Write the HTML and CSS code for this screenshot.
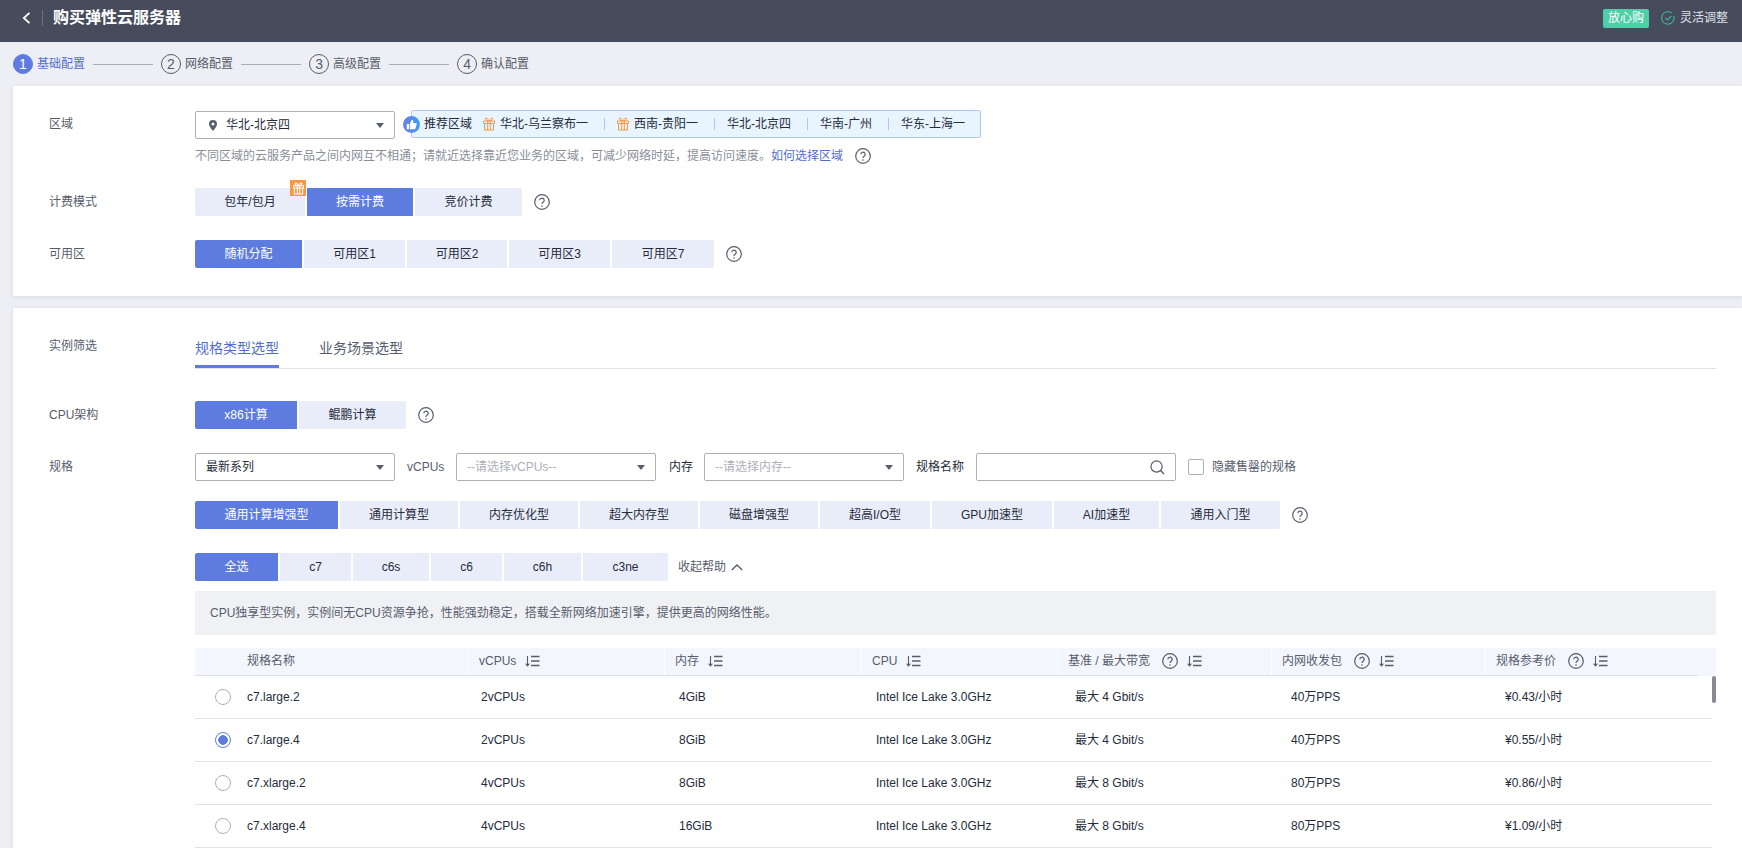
FILE: index.html
```html
<!DOCTYPE html>
<html lang="zh-CN">
<head>
<meta charset="utf-8">
<title>购买弹性云服务器</title>
<link rel="stylesheet" href="styles.css">
</head>
<body>
<svg class="defs" aria-hidden="true">
  <symbol id="q" viewBox="0 0 16 16"><circle cx="8" cy="8" r="7.3" fill="none" stroke="#575d6c" stroke-width="1.2"/><path d="M5.8 6.3a2.2 2.2 0 1 1 3.5 1.8c-.9.6-1.3 1-1.3 2" fill="none" stroke="#575d6c" stroke-width="1.2"/><circle cx="8" cy="12" r=".8" fill="#575d6c"/></symbol>
  <symbol id="sort" viewBox="0 0 16 14"><path d="M3.5 2v9.5M1.6 9.6l1.9 2.2 1.9-2.2" fill="none" stroke="#575d6c" stroke-width="1.1"/><path d="M7 2.5h8.5M7 7h8.5M7 11.5h8.5" stroke="#575d6c" stroke-width="1.3"/></symbol>
  <symbol id="gift" viewBox="0 0 12 14"><path d="M1.500 6.500h9V13h-9zM.5 4h11v2.500H.5zM4.700 4v9M7.300 4v9M6 4C5 1.500 3 .5 2.300 1.500S3.500 4 6 4C8.500 4 10.400 2.500 9.700 1.500S7 1.500 6 4" fill="none" stroke="#fa9841" stroke-width="1"/></symbol>
  <symbol id="giftw" viewBox="0 0 12 14"><path d="M1.500 6.500h9V13h-9zM.5 4h11v2.500H.5zM4.700 4v9M7.300 4v9M6 4C5 1.500 3 .5 2.300 1.500S3.500 4 6 4C8.500 4 10.400 2.500 9.700 1.500S7 1.500 6 4" fill="none" stroke="#fff" stroke-width="1.100"/></symbol>
  <linearGradient id="thumbfill" x1="0" y1="0" x2="1" y2="0"><stop offset="0" stop-color="#6f7fe6"/><stop offset="1" stop-color="#3d9bf0"/></linearGradient>
</svg>

<header class="topbar">
  <svg class="back" viewBox="0 0 9 12"><path d="M7.500 .8 1.800 6l5.700 5.200" fill="none" stroke="#fff" stroke-width="1.800"/></svg>
  <span class="divider"></span>
  <h1 class="title">购买弹性云服务器</h1>
  <span class="badge">放心购</span>
  <svg class="check" viewBox="0 0 14 14"><path d="M12.600 4.600A6.200 6.200 0 1 1 10.600 2" fill="none" stroke="#3fb795" stroke-width="1.100"/><path d="M4.300 6.800l2.200 2.200 3.900-4" fill="none" stroke="#3fb795" stroke-width="1.100"/></svg>
  <span class="flex-adjust">灵活调整</span>
</header>

<nav class="steps">
  <span class="num num-on">1</span><span class="step step-on">基础配置</span><span class="line"></span>
  <span class="num">2</span><span class="step">网络配置</span><span class="line"></span>
  <span class="num">3</span><span class="step">高级配置</span><span class="line"></span>
  <span class="num">4</span><span class="step">确认配置</span>
</nav>

<section class="card card-a">
  <div class="row row-region">
    <label class="label">区域</label>
    <div class="select select-region">
      <svg class="pin" viewBox="0 0 8 11"><path d="M4 0a4 4 0 0 1 4 4c0 2.600-4 7-4 7S0 6.600 0 4a4 4 0 0 1 4-4zm0 2.500a1.500 1.500 0 1 0 0 3 1.500 1.500 0 0 0 0-3z" fill="#575d6c" fill-rule="evenodd"/></svg>
      <span>华北-北京四</span><i class="caret"></i>
    </div>
    <div class="rec">
      <svg class="thumb" viewBox="0 0 17 17"><circle cx="8.500" cy="8.500" r="8.500" fill="url(#thumbfill)"/><path d="M3.800 8h2.200v5.200H3.800zM6.800 8l2-4.200c1.100 0 1.700.9 1.500 1.900L10 7h2.800c.7 0 1.100.6.900 1.200l-1.200 4.100c-.1.500-.6.900-1.100.9H6.800z" fill="#fff"/></svg>
      <span class="rec-title">推荐区域</span>
      <span class="rec-item"><svg class="gift" viewBox="0 0 12 14"><use href="#gift"/></svg>华北-乌兰察布一</span>
      <span class="rec-item"><svg class="gift" viewBox="0 0 12 14"><use href="#gift"/></svg>西南-贵阳一</span>
      <span class="rec-item">华北-北京四</span>
      <span class="rec-item">华南-广州</span>
      <span class="rec-item rec-last">华东-上海一</span>
    </div>
  </div>
  <div class="hint">不同区域的云服务产品之间内网互不相通；请就近选择靠近您业务的区域，可减少网络时延，提高访问速度。<a class="link">如何选择区域</a><svg class="help help-hint"><use href="#q"/></svg></div>

  <div class="row row-gap">
    <label class="label">计费模式</label>
    <div class="seg seg-bill">
      <button class="btn btn-first">包年/包月<span class="gift-badge"><svg viewBox="0 0 12 14"><use href="#giftw"/></svg></span></button>
      <button class="btn on">按需计费</button>
      <button class="btn btn-last">竞价计费</button>
    </div>
    <svg class="help"><use href="#q"/></svg>
  </div>

  <div class="row row-gap">
    <label class="label">可用区</label>
    <div class="seg seg-zone">
      <button class="btn on btn-first">随机分配</button>
      <button class="btn">可用区1</button>
      <button class="btn">可用区2</button>
      <button class="btn">可用区3</button>
      <button class="btn btn-last">可用区7</button>
    </div>
    <svg class="help"><use href="#q"/></svg>
  </div>
</section>

<section class="card card-b">
  <div class="row row-tabs">
    <label class="label label-tabs">实例筛选</label>
    <div class="tabs">
      <span class="tab tab-on">规格类型选型</span>
      <span class="tab">业务场景选型</span>
    </div>
  </div>

  <div class="row row-cpu">
    <label class="label">CPU架构</label>
    <div class="seg seg-cpu">
      <button class="btn on btn-first">x86计算</button>
      <button class="btn btn-last">鲲鹏计算</button>
    </div>
    <svg class="help"><use href="#q"/></svg>
  </div>

  <div class="row row-gap">
    <label class="label">规格</label>
    <div class="select"><span>最新系列</span><i class="caret"></i></div>
    <span class="field-label fl-vcpu">vCPUs</span>
    <div class="select select-ph"><span>--请选择vCPUs--</span><i class="caret"></i></div>
    <span class="field-label fl-mem">内存</span>
    <div class="select select-ph"><span>--请选择内存--</span><i class="caret"></i></div>
    <span class="field-label fl-name">规格名称</span>
    <div class="select search">
      <svg class="search-icon" viewBox="0 0 16 16"><circle cx="7" cy="7" r="6" fill="none" stroke="#575d6c" stroke-width="1.300"/><path d="M11.300 11.300 15 15" stroke="#575d6c" stroke-width="1.500"/></svg>
    </div>
    <span class="checkbox"></span>
    <span class="check-label">隐藏售罄的规格</span>
  </div>

  <div class="row row-type">
    <span class="label"></span>
    <div class="seg seg-type">
      <button class="btn on btn-first">通用计算增强型</button>
      <button class="btn">通用计算型</button>
      <button class="btn">内存优化型</button>
      <button class="btn">超大内存型</button>
      <button class="btn">磁盘增强型</button>
      <button class="btn">超高I/O型</button>
      <button class="btn">GPU加速型</button>
      <button class="btn">AI加速型</button>
      <button class="btn btn-last">通用入门型</button>
    </div>
    <svg class="help"><use href="#q"/></svg>
  </div>

  <div class="row row-gap">
    <span class="label"></span>
    <div class="seg seg-sub">
      <button class="btn on btn-first">全选</button>
      <button class="btn">c7</button>
      <button class="btn">c6s</button>
      <button class="btn">c6</button>
      <button class="btn">c6h</button>
      <button class="btn btn-last">c3ne</button>
    </div>
    <span class="collapse">收起帮助</span>
    <svg class="chevron" viewBox="0 0 12 7"><path d="M.8 6 6 1l5.200 5" fill="none" stroke="#575d6c" stroke-width="1.400"/></svg>
  </div>

  <div class="help-box">CPU独享型实例，实例间无CPU资源争抢，性能强劲稳定，搭载全新网络加速引擎，提供更高的网络性能。</div>

  <div class="table">
    <div class="thead">
      <div class="th th-name">规格名称</div>
      <div class="th">vCPUs<svg class="sort sort-near"><use href="#sort"/></svg></div>
      <div class="th">内存<svg class="sort sort-near"><use href="#sort"/></svg></div>
      <div class="th">CPU<svg class="sort sort-near"><use href="#sort"/></svg></div>
      <div class="th">基准 / 最大带宽<svg class="help help-th"><use href="#q"/></svg><svg class="sort"><use href="#sort"/></svg></div>
      <div class="th">内网收发包<svg class="help help-th"><use href="#q"/></svg><svg class="sort"><use href="#sort"/></svg></div>
      <div class="th">规格参考价<svg class="help help-th"><use href="#q"/></svg><svg class="sort"><use href="#sort"/></svg></div>
    </div>
    <div class="tr">
      <div class="td td-name"><span class="radio"></span>c7.large.2</div><div class="td">2vCPUs</div><div class="td">4GiB</div><div class="td">Intel Ice Lake 3.0GHz</div><div class="td">最大 4 Gbit/s</div><div class="td">40万PPS</div><div class="td">¥0.43/小时</div>
    </div>
    <div class="tr">
      <div class="td td-name"><span class="radio radio-on"></span>c7.large.4</div><div class="td">2vCPUs</div><div class="td">8GiB</div><div class="td">Intel Ice Lake 3.0GHz</div><div class="td">最大 4 Gbit/s</div><div class="td">40万PPS</div><div class="td">¥0.55/小时</div>
    </div>
    <div class="tr">
      <div class="td td-name"><span class="radio"></span>c7.xlarge.2</div><div class="td">4vCPUs</div><div class="td">8GiB</div><div class="td">Intel Ice Lake 3.0GHz</div><div class="td">最大 8 Gbit/s</div><div class="td">80万PPS</div><div class="td">¥0.86/小时</div>
    </div>
    <div class="tr">
      <div class="td td-name"><span class="radio"></span>c7.xlarge.4</div><div class="td">4vCPUs</div><div class="td">16GiB</div><div class="td">Intel Ice Lake 3.0GHz</div><div class="td">最大 8 Gbit/s</div><div class="td">80万PPS</div><div class="td">¥1.09/小时</div>
    </div>
    <span class="scrollbar"></span>
  </div>
</section>
</body>
</html>
```
FILE: styles.css
```css
* { box-sizing: border-box; }
html, body { margin: 0; height: 848px; overflow: hidden; }
body {
  background: #eeeff4;
  color: #252b3a;
  font: 12px/16px "Liberation Sans", "Noto Sans CJK SC", sans-serif;
}
.defs { position: absolute; width: 0; height: 0; overflow: hidden; }

/* top bar */
.topbar {
  height: 42px;
  padding: 0 14px 6px 22px;
  background: #474c5c;
  display: flex;
  align-items: center;
}
.back { width: 9px; height: 12px; }
.divider { width: 1px; height: 16px; margin-left: 11px; background: #6a6e7b; }
.title { margin: 0 0 0 10px; flex: 1; color: #fff; font-size: 16px; line-height: 24px; font-weight: 700; }
.badge { width: 46px; height: 19px; line-height: 19px; text-align: center; color: #fff; background: #4dd0a8; border-radius: 2px; }
.check { width: 14px; height: 14px; margin-left: 12px; }
.flex-adjust { margin-left: 5px; color: #dfe1e8; }

/* steps */
.steps { height: 44px; padding-left: 13px; display: flex; align-items: center; }
.num {
  width: 20px; height: 20px; flex: none;
  border: 1px solid #575d6c; border-radius: 50%;
  text-align: center; line-height: 18px; font-size: 14px; color: #575d6c;
}
.num-on { background: #5e7ce0; border-color: #5e7ce0; color: #fff; }
.step { margin-left: 4px; color: #575d6c; }
.step-on { color: #526ecc; }
.line { width: 60px; height: 1px; margin: 0 8px; background: #a9abb5; }

/* cards */
.card { margin-left: 13px; background: #fff; box-shadow: 0 1px 4px rgba(37, 43, 58, .1); }
.card-a { height: 210px; padding-top: 24px; }
.card-b { margin-top: 12px; height: 540px; padding-top: 20px; position: relative; }

.row { display: flex; align-items: center; padding-left: 36px; }
.row-region { height: 28px; }
.row-gap { margin-top: 24px; }
.row-tabs { align-items: flex-start; }
.row-cpu { margin-top: 32px; }
.row-type { margin-top: 20px; }
.label { width: 146px; flex: none; color: #575d6c; }
.label-tabs { padding-top: 10px; }

/* select */
.select {
  width: 200px; height: 28px; flex: none;
  display: flex; align-items: center;
  padding: 0 10px;
  background: #fff;
  border: 1px solid #adb0b8;
  border-radius: 2px;
}
.select span { flex: 1; white-space: nowrap; }
.select-ph { color: #adb0b8; }
.select-region { margin-top: 2px; }
.caret {
  width: 0; height: 0; flex: none;
  border-left: 4.5px solid transparent;
  border-right: 4.5px solid transparent;
  border-top: 5px solid #575d6c;
}
.pin { width: 8px; height: 11px; margin: 0 9px 0 3px; flex: none; }

/* recommended regions */
.rec {
  width: 570px; height: 28px; margin-left: 16px; flex: none;
  display: flex; align-items: center;
  background: #e8f4ff;
  border: 1px solid #b3c5f5;
  border-radius: 2px;
  white-space: nowrap;
}
.thumb { width: 17px; height: 17px; margin-left: -9px; flex: none; }
.rec-title { margin-left: 4px; margin-right: 11px; flex: none; }
.rec-item { display: flex; flex: none; align-items: center; height: 12px; line-height: 12px; padding: 0 16px 0 12px; border-right: 1px solid #b3c5f5; }
.rec-title + .rec-item { padding-left: 0; }
.rec-last { border-right: 0; }
.gift { width: 12px; height: 14px; margin-right: 5px; flex: none; }

.hint { margin: 10px 0 0 182px; height: 16px; display: flex; align-items: center; color: #8a8e99; }
.link { color: #526ecc; }
.help { width: 16px; height: 16px; flex: none; margin-left: 12px; }
.help-hint { margin-left: 12px; }

/* segmented buttons */
.seg { display: grid; column-gap: 2px; flex: none; }
.seg-bill { grid-template-columns: 110px 106px 107px; }
.seg-zone { grid-template-columns: 107px 101px 100px 101px 102px; }
.seg-cpu { grid-template-columns: 102px 107px; }
.seg-type { grid-template-columns: 143px 118px 118px 118px 118px 110px 120px 105px 119px; }
.seg-sub { grid-template-columns: 83px 71px 76px 71px 77px 85px; }
.btn {
  position: relative;
  height: 28px; padding: 0; border: 0;
  background: #e9edfa; color: #252b3a;
  font: inherit; text-align: center;
}
.btn-first { border-radius: 2px 0 0 2px; }
.btn-last { border-radius: 0 2px 2px 0; }
.btn.on { background: #5e7ce0; color: #fff; }
.gift-badge {
  position: absolute; top: -8px; right: -1px;
  width: 16px; height: 16px;
  display: flex; align-items: center; justify-content: center;
  background: #fa9841;
}
.gift-badge svg { width: 11px; height: 13px; }

/* tabs */
.tabs { width: 1521px; height: 41px; flex: none; display: flex; gap: 40px; border-bottom: 1px solid #dfe1e8; }
.tab { height: 40px; padding-top: 12px; font-size: 14px; line-height: 16px; color: #575d6c; }
.tab-on { color: #526ecc; border-bottom: 3px solid #5e7ce0; }

/* filter row */
.field-label { color: #252b3a; flex: none; }
.fl-vcpu { width: 61px; padding-left: 12px; color: #575d6c; }
.fl-mem { width: 48px; padding-left: 13px; }
.fl-name { width: 72px; padding-left: 12px; }
.search { width: 200px; justify-content: flex-end; }
.search-icon { width: 15px; height: 15px; margin-right: 0; }
.checkbox { width: 16px; height: 16px; margin-left: 12px; border: 1px solid #adb0b8; border-radius: 2px; flex: none; }
.check-label { margin-left: 8px; color: #575d6c; }
.collapse { margin-left: 10px; color: #575d6c; }
.chevron { width: 12px; height: 7px; margin-left: 5px; }

/* help box */
.help-box {
  width: 1521px; height: 44px; margin: 10px 0 0 182px;
  padding-left: 15px; line-height: 44px;
  background: #f0f1f5; color: #575d6c;
}

/* table */
.table { width: 1521px; margin: 13px 0 0 182px; position: relative; }
.thead, .tr {
  display: grid;
  grid-template-columns: 273px 196px 197px 196px 214px 214px 1fr;
}
.thead { position: relative; height: 28px; background: #f3f6fd; }
.thead::after { content: ""; position: absolute; left: 0; right: 18px; bottom: 0; height: 1px; background: #dfe1e8; }
.th { display: flex; align-items: center; padding-left: 10px; color: #575d6c; border-left: 1px solid #fff; padding-bottom: 2px; }
.th-name { padding-left: 52px; border-left: 0; }
.sort { width: 16px; height: 14px; margin-left: 8px; flex: none; }
.sort-near { margin-left: 8px; }
.help-th { margin-left: 12px; }
.tr { width: 1517px; height: 43px; border-bottom: 1px solid #dfe1e8; }
.td { display: flex; align-items: center; padding-left: 13px; color: #252b3a; }
.td:nth-child(3), .td:nth-child(4) { padding-left: 15px; }
.td:nth-child(5) { padding-left: 18px; }
.td:nth-child(6), .td:nth-child(7) { padding-left: 20px; }
.td-name { padding-left: 20px; }
.radio { width: 16px; height: 16px; margin-right: 16px; border: 1px solid #adb0b8; border-radius: 50%; flex: none; }
.radio-on { border-color: #5e7ce0; background: radial-gradient(circle, #5e7ce0 0 4.5px, #fff 5px); }
.scrollbar { position: absolute; top: 28px; right: 0; width: 4px; height: 27px; background: #858a94; border-radius: 2px; }
```
